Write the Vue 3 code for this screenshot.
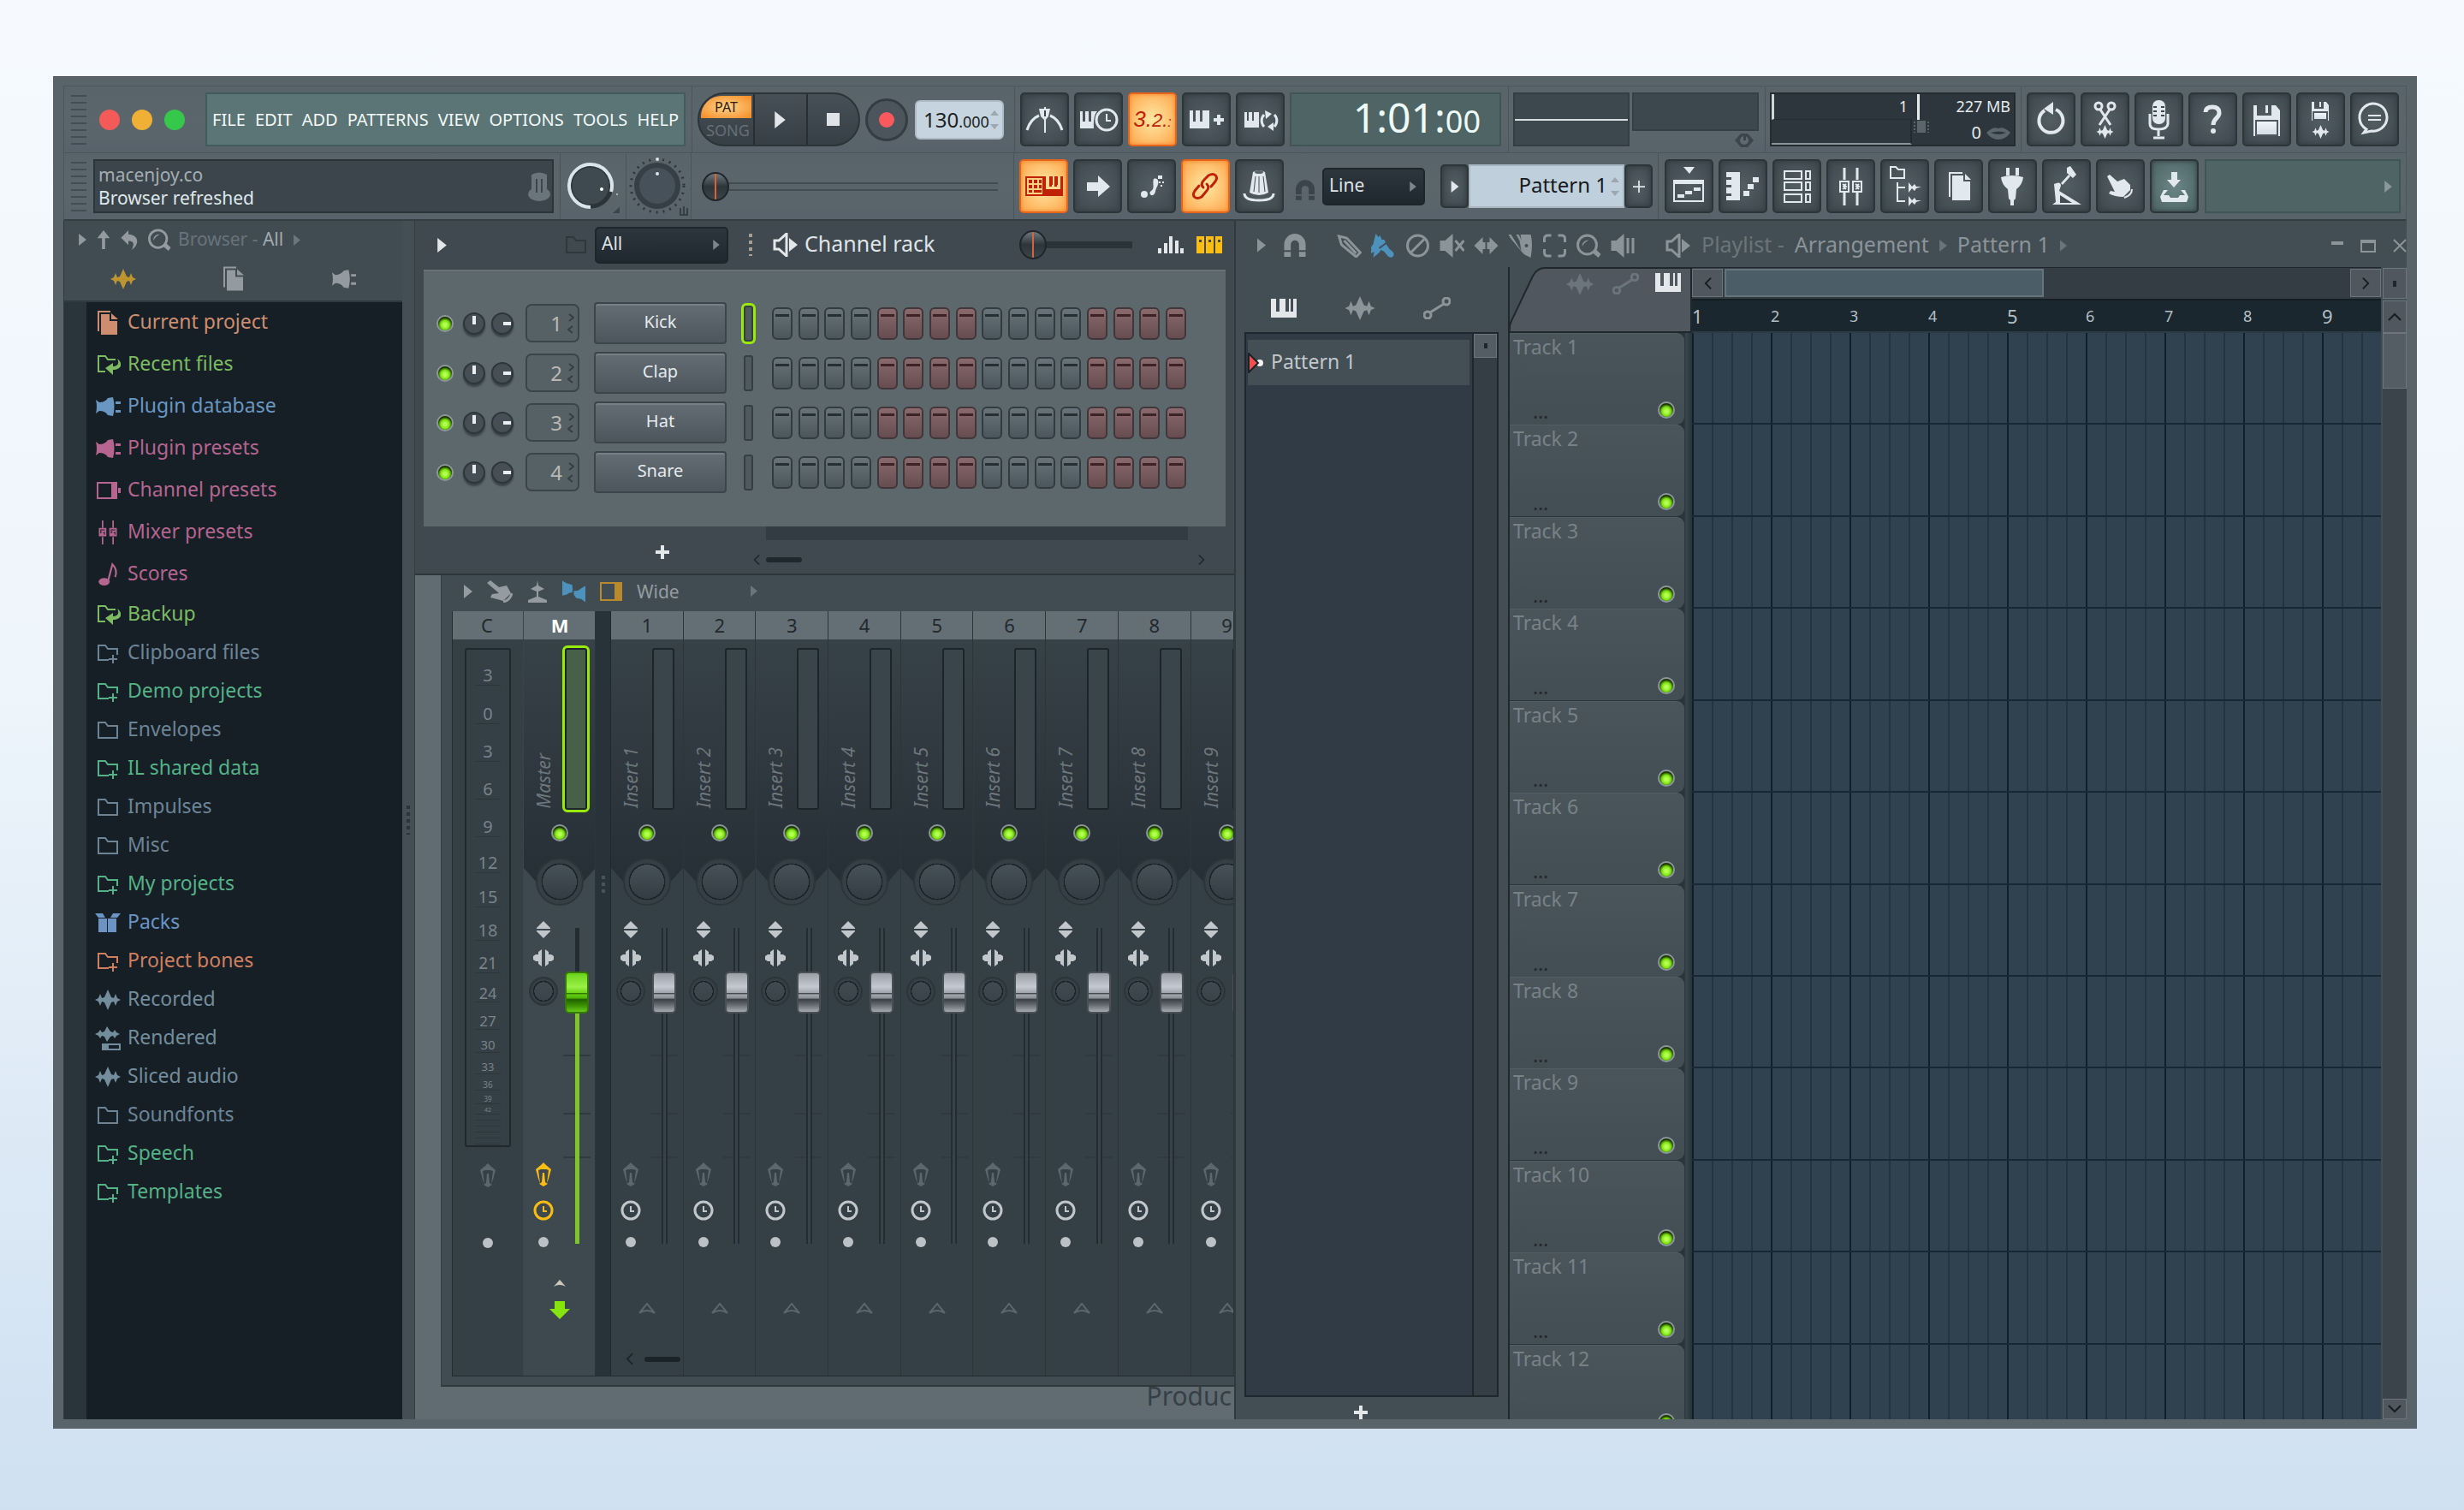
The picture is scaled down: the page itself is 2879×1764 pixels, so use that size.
<script setup>
import { ref } from 'vue'

const menus = ['FILE', 'EDIT', 'ADD', 'PATTERNS', 'VIEW', 'OPTIONS', 'TOOLS', 'HELP']

const transportToggles = [
  { icon: 'metronome', label: 'Metronome' },
  { icon: 'wait', label: 'Wait for input' },
  { icon: '', label: 'Countdown', on: true },
  { icon: 'overdub', label: 'Overdub' },
  { icon: 'loop', label: 'Loop record' },
]
const editToggles = [
  { icon: 'typing', label: 'Typing keyboard', on: true },
  { icon: 'step', label: 'Step edit' },
  { icon: 'foot', label: 'Multilink' },
  { icon: 'link', label: 'Link controllers', on: true },
  { icon: 'knob', label: 'Last tweaked' },
]
const fileTools = [
  { icon: 'undo', label: 'Undo' },
  { icon: 'cut', label: 'Cut audio' },
  { icon: 'mic', label: 'Record audio' },
  { icon: 'help', label: 'Help' },
  { icon: 'save', label: 'Save' },
  { icon: 'savewave', label: 'Export' },
  { icon: 'chat', label: 'News' },
]
const windowTools = [
  { icon: 'w-playlist', label: 'Playlist' },
  { icon: 'w-roll', label: 'Piano roll' },
  { icon: 'w-rack', label: 'Channel rack' },
  { icon: 'w-mixer', label: 'Mixer' },
  { icon: 'w-browser', label: 'Browser' },
  { icon: 'w-files', label: 'Project files' },
  { icon: 'w-plug', label: 'Plugins' },
  { icon: 'w-lamp', label: 'Tempo tapper' },
  { icon: 'w-hand', label: 'Touch controller' },
  { icon: 'w-down', label: 'Downloads', teal: true },
]

const folders = [
  ['Current project', 'docs', '#cf8d70', 1],
  ['Recent files', 'folder-back', '#7dbb62', 1],
  ['Plugin database', 'plug', '#6a97c2', 1],
  ['Plugin presets', 'plug', '#b5658f', 1],
  ['Channel presets', 'channel', '#b5658f', 1],
  ['Mixer presets', 'mixer', '#b5658f', 1],
  ['Scores', 'note', '#b5658f', 1],
  ['Backup', 'folder-back', '#7dbb62', 0],
  ['Clipboard files', 'folder-plus', '#6d8496', 0],
  ['Demo projects', 'folder-plus', '#55b287', 0],
  ['Envelopes', 'folder', '#6d8496', 0],
  ['IL shared data', 'folder-plus', '#55b287', 0],
  ['Impulses', 'folder', '#6d8496', 0],
  ['Misc', 'folder', '#6d8496', 0],
  ['My projects', 'folder-plus', '#55b287', 0],
  ['Packs', 'box', '#6b94c4', 0],
  ['Project bones', 'folder-plus', '#cf7f60', 0],
  ['Recorded', 'wave', '#738d9c', 0],
  ['Rendered', 'wave-bar', '#738d9c', 0],
  ['Sliced audio', 'wave', '#738d9c', 0],
  ['Soundfonts', 'folder', '#6d8496', 0],
  ['Speech', 'folder-plus', '#55b287', 0],
  ['Templates', 'folder-plus', '#55b287', 0],
].map(([name, icon, color, tall]) => ({ name, icon, color, tall }))

const channels = ['Kick', 'Clap', 'Hat', 'Snare']
const isRed = (n) => Math.floor((n - 1) / 4) % 2 === 1

const scale = [
  ['3', 42, 20], ['0', 45, 20], ['3', 44, 20], ['6', 44, 20], ['9', 44, 20], ['12', 42, 20],
  ['15', 40, 20], ['18', 39, 20], ['21', 38, 19], ['24', 34, 18], ['27', 32, 17], ['30', 27, 15],
  ['33', 25, 13], ['36', 19, 10], ['39', 16, 8], ['42', 12, 7],
].map(([t, h, s]) => ({ t, h, s }))

const strips = [
  { no: 'M', name: 'Master', master: true },
  ...Array.from({ length: 9 }, (_, i) => ({ no: String(i + 1), name: `Insert ${i + 1}` })),
]

const paintTools = ['pencil', 'brush', 'forbid', 'mute', 'stretch', 'slice', 'select', 'zoom', 'preview']
const line = ref('Line')
const group = ref('All')
</script>

<template>
  <div class="page">
    <svg class="sprite" aria-hidden="true">
      <defs>
        <linearGradient id="drum" x1="0" y1="0" x2="0" y2="1">
          <stop offset="0" stop-color="#f2f7fa" /><stop offset="1" stop-color="#d3dde6" />
        </linearGradient>
      </defs>
      <symbol id="metronome" viewBox="0 0 57 63">
        <path d="M8 44Q12 31 22 27M49 44Q45 31 35 27" fill="none" stroke="currentColor" stroke-width="3" />
        <path d="M22 19h13l-2 9-4 5-5-5zM28 17h2v30h-2z" fill="currentColor" />
        <path d="M28 21v7h2v-7z" fill="#3b454b" />
      </symbol>
      <symbol id="wait" viewBox="0 0 57 63">
        <path d="M7 22h3v12h3V22h4v12h3V22h7q-5 5-4 20H7z" fill="currentColor" />
        <circle cx="38" cy="32" r="12" fill="none" stroke="currentColor" stroke-width="3" />
        <path d="M38 25v8h5" fill="none" stroke="currentColor" stroke-width="2" />
      </symbol>
      <symbol id="overdub" viewBox="0 0 57 63">
        <path d="M9 21h4v13h3V21h5v13h3V21h4v13h0V21h4v21H9z" fill="currentColor" />
        <path d="M37 30h4v-4h4v4h4v4h-4v4h-4v-4h-4z" fill="currentColor" />
      </symbol>
      <symbol id="loop" viewBox="0 0 57 63">
        <path d="M10 23h3v10h2V23h4v10h2V23h6v18H10z" fill="currentColor" />
        <path d="M33 40a10 10 0 0 1 0-14M45 26a10 10 0 0 1 0 14" fill="none" stroke="currentColor" stroke-width="3" />
        <path d="M34 21l8 4-7 6zM44 35v10l-7-5z" fill="currentColor" />
      </symbol>
      <symbol id="typing" viewBox="0 0 57 63">
        <path d="M7 20h44v23H7z" fill="#c02208" />
        <path d="M9 22h18v19H9z" fill="#ffd080" />
        <path d="M11 24h4v4h-4zM17 24h4v4h-4zM23 24h3v4h-3zM11 30h4v4h-4zM17 30h4v4h-4zM23 30h3v4h-3zM11 36h4v3h-4zM17 36h9v3h-9z" fill="#c02208" />
        <path d="M31 20h4v12h3V20h3v12h3V20h4v15H31z" fill="#ffd890" />
        <path d="M38 20v10M44 20v10" stroke="#c02208" stroke-width="2" />
      </symbol>
      <symbol id="step" viewBox="0 0 57 63">
        <path d="M16 27h13v-8l14 13-14 12v-7H16z" fill="currentColor" />
      </symbol>
      <symbol id="foot" viewBox="0 0 57 63">
        <circle cx="20" cy="41" r="4" fill="currentColor" />
        <path d="M31 23c5-2 7 4 4 9s-1 8-5 10c-3 1-5-3-2-5 5-3 1-9 3-14z" fill="currentColor" />
        <path d="M36 19h5v4h-5zM37 26h2v2h-2zM41 26h2v2h-2zM39 30h2v2h-2z" fill="currentColor" />
      </symbol>
      <symbol id="link" viewBox="0 0 57 63">
        <g fill="none" stroke="#c02208" stroke-width="3" stroke-linecap="round">
          <path d="M26 33c-3-3-2-6 1-9l5-5c7-4 12 1 8 7l-5 6" />
          <path d="M30 29c3 3 2 6-1 9l-5 6c-7 4-12-1-8-7l5-6" />
        </g>
      </symbol>
      <symbol id="knob" viewBox="0 0 57 63">
        <path d="M21 15q7-4 14 0l4 24q-11 6-22 0z" fill="currentColor" />
        <path d="M24 20l-2 18M28 20v19M33 20l2 18" stroke="#434c52" stroke-width="1" />
        <ellipse cx="28" cy="15" rx="5" ry="2" fill="#59636a" />
        <path d="M11 40q0 8 17 8t17-8" fill="none" stroke="currentColor" stroke-width="3" />
      </symbol>
      <symbol id="undo" viewBox="0 0 57 63">
        <path d="M21 21a14 14 0 1 0 13-1" fill="none" stroke="currentColor" stroke-width="4" />
        <path d="M31 11v15L20 19z" fill="currentColor" />
      </symbol>
      <symbol id="cut" viewBox="0 0 57 63">
        <g fill="none" stroke="currentColor" stroke-width="3">
          <circle cx="21" cy="16" r="4" /><circle cx="36" cy="16" r="4" />
          <path d="M23 20l12 18M34 20L22 38" />
        </g>
        <use href="#wave" x="16" y="38" width="25" height="16" />
      </symbol>
      <symbol id="mic" viewBox="0 0 57 63">
        <rect x="21" y="9" width="15" height="28" rx="7" fill="currentColor" />
        <path d="M22 17h4M31 17h4M22 22h4M31 22h4M22 27h4M31 27h4" stroke="#3b454b" stroke-width="2" />
        <path d="M18 25v12q0 6 10 6t11-6V25M28 43v8M22 53h13" fill="none" stroke="currentColor" stroke-width="3" />
      </symbol>
      <symbol id="help" viewBox="0 0 57 63">
        <path d="M20 23q0-6 8-6t8 7c0 6-7 6-7 14" fill="none" stroke="currentColor" stroke-width="5" />
        <circle cx="29" cy="45" r="3" fill="currentColor" />
      </symbol>
      <symbol id="save" viewBox="0 0 57 63">
        <path d="M13 15h4v12h17V15h5l5 6v30H13z" fill="currentColor" />
        <path d="M27 15h3v9h-3z" fill="currentColor" />
        <path d="M16 33h25v17H16z" fill="url(#drum)" stroke="#50595f" stroke-width="2" />
      </symbol>
      <symbol id="savewave" viewBox="0 0 57 63">
        <path d="M18 11h3v8h11v-8h3l3 4v18H18z" fill="currentColor" />
        <path d="M27 11h2v6h-2z" fill="currentColor" />
        <path d="M20 23h16v9H20z" fill="url(#drum)" stroke="#50595f" stroke-width="2" />
        <use href="#wave" x="16" y="38" width="25" height="16" />
      </symbol>
      <symbol id="chat" viewBox="0 0 57 63">
        <path d="M19 43a16 16 0 1 1 6 2l-9 2z" fill="none" stroke="currentColor" stroke-width="3" />
        <path d="M21 27h15M21 32h15" stroke="currentColor" stroke-width="2" />
      </symbol>
      <symbol id="w-playlist" viewBox="0 0 57 63">
        <path d="M22 9h13l-6 8z" fill="currentColor" />
        <path d="M11 25h34v24H11z" fill="none" stroke="currentColor" stroke-width="2" />
        <path d="M10 24h36v5H10zM15 41h8v4h-8zM24 37h8v4h-8zM34 33h8v4h-8z" fill="currentColor" />
      </symbol>
      <symbol id="w-roll" viewBox="0 0 57 63">
        <path d="M9 15h16v33H9v-5h6v-3H9v-7h6v-3H9v-6h6v-3H9z" fill="currentColor" />
        <path d="M29 37h7v6h-7zM34 29h7v6h-7zM40 21h7v6h-7z" fill="currentColor" />
      </symbol>
      <symbol id="w-rack" viewBox="0 0 57 63">
        <path d="M14 14h20v9H14zM39 14h5v9h-5zM14 27h20v9H14zM39 27h5v9h-5zM14 41h20v9H14zM39 41h5v9h-5z" fill="none" stroke="currentColor" stroke-width="2" />
      </symbol>
      <symbol id="w-mixer" viewBox="0 0 57 63">
        <path d="M21 10v14M21 39v15M36 10v14M36 39v15" stroke="currentColor" stroke-width="3" />
        <path d="M16 26h10v12H16zM31 26h10v12H31zM19 29l4 3-4 3M23 29l-3 3 3 3M34 29l4 3-4 3M38 29l-3 3 3 3" fill="none" stroke="currentColor" stroke-width="2" />
      </symbol>
      <symbol id="w-browser" viewBox="0 0 57 63">
        <path d="M12 9h6l3 3h7v10H12zM20 27v22h9M20 33h9" fill="none" stroke="currentColor" stroke-width="2" />
        <path d="M33 27l4 5 3-3 2 3h6l-6 2-2 3-3-3-4 5zM33 43l4 5 3-3 2 3h6l-6 2-2 3-3-3-4 5z" fill="currentColor" />
      </symbol>
      <symbol id="w-files" viewBox="0 0 57 63">
        <path d="M18 44V16h15" fill="none" stroke="currentColor" stroke-width="2" />
        <path d="M21 19h13v7h8v22H21z" fill="currentColor" /><path d="M36 17l7 7h-7z" fill="currentColor" />
      </symbol>
      <symbol id="w-plug" viewBox="0 0 57 63">
        <path d="M21 10h4v9h-4zM32 10h4v9h-4zM15 21q13-4 26 0-1 9-8 14l-1 11-2 2v6h-4v-6l-2-2-1-11q-7-5-8-14z" fill="currentColor" />
      </symbol>
      <symbol id="w-lamp" viewBox="0 0 57 63">
        <path d="M29 10l4-2 7 10-4 4-7-6zM33 20l-9 10-2-2 9-10z" fill="currentColor" />
        <path d="M14 29q8-4 8 2l-2 6 26 16H12l4-3z" fill="currentColor" />
        <path d="M21 42l14 9H21z" fill="#434c52" />
      </symbol>
      <symbol id="w-hand" viewBox="0 0 57 63">
        <path d="M13 20l3-2 9 8 8-3 7 7v6l-8 8q-10 0-17-4l2-3 5 1z" fill="currentColor" />
        <path d="M42 35q0 7-9 10" fill="none" stroke="currentColor" stroke-width="2" />
      </symbol>
      <symbol id="w-down" viewBox="0 0 57 63">
        <path d="M25 15h7v9h4l-8 9-8-9h5z" fill="currentColor" />
        <path d="M16 36h5l-5 6h6l2 3h9l2-3h6l-5-6h5l4 8-2 6H14l-2-6z" fill="currentColor" />
      </symbol>

      <symbol id="wave" viewBox="0 0 30 24">
        <path d="M0 12l4-2 2-5 2 5 3-1 4-9 4 9 3 1 2-5 2 5 4 2-4 2-2 5-2-5-3 1-4 9-4-9-3-1-2 5-2-5z" fill="currentColor" />
      </symbol>
      <symbol id="wave-bar" viewBox="0 0 30 28">
        <path d="M0 9l4-2 2-3 2 3 3-1 3-6 4 6 3 1 2-3 2 3 4 2-4 2-2 3-2-3-3 1-4 6-3-6-3-1-2 3-2-3z" fill="currentColor" />
        <path d="M9 21h20v6H9z" fill="none" stroke="currentColor" stroke-width="2" /><path d="M9 21h7v6H9z" fill="currentColor" />
      </symbol>
      <symbol id="docs" viewBox="0 0 24 28">
        <path d="M1 24V1h14" fill="none" stroke="currentColor" stroke-width="2" />
        <path d="M4 4h10v8h9v16H4z" fill="currentColor" /><path d="M16 3l8 7h-8z" fill="currentColor" />
      </symbol>
      <symbol id="folder" viewBox="0 0 30 24">
        <path d="M4 3h8l3 4h11v14H4z" fill="none" stroke="currentColor" stroke-width="2" />
      </symbol>
      <symbol id="folder-plus" viewBox="0 0 30 24">
        <path d="M26 14V7H15l-3-4H4v17h12" fill="none" stroke="currentColor" stroke-width="2" />
        <path d="M21 14v10M16 19h10" stroke="currentColor" stroke-width="2" />
      </symbol>
      <symbol id="folder-back" viewBox="0 0 30 24">
        <path d="M12 20H4V2h8l3 4h9" fill="none" stroke="currentColor" stroke-width="2" />
        <path d="M26 5c8 6 4 13-5 13v6l-9-8 9-6v4c5 0 8-3 5-9z" fill="currentColor" />
      </symbol>
      <symbol id="plug" viewBox="0 0 30 24">
        <path d="M1 4l4 3q7 0 10-5l6-1q3 11 0 22l-6-1q-3-5-10-5l-4 3q2-8 0-16z" fill="currentColor" />
        <path d="M24 6h6v3h-6zM24 16h6v3h-6z" fill="currentColor" />
      </symbol>
      <symbol id="channel" viewBox="0 0 30 24">
        <path d="M3 3h22v18H3z" fill="none" stroke="currentColor" stroke-width="2" /><path d="M19 3h6v18h-6zM27 9h3v6h-3z" fill="currentColor" />
      </symbol>
      <symbol id="mixer" viewBox="0 0 26 32">
        <path d="M6 0v10M6 22v10M20 0v10M20 22v10" stroke="currentColor" stroke-width="2" />
        <path d="M2 11h8v9H2zM16 11h8v9h-8zM4 14h4l-4 4h4M18 14h4l-4 4h4" fill="none" stroke="currentColor" stroke-width="2" />
      </symbol>
      <symbol id="note" viewBox="0 0 24 26">
        <ellipse cx="8" cy="21" rx="6" ry="4" fill="currentColor" />
        <path d="M12 21L17 2q6 6 3 14" fill="none" stroke="currentColor" stroke-width="2" />
      </symbol>
      <symbol id="box" viewBox="0 0 30 24">
        <path d="M4 7h10v16H4zM15 7h10v16H15zM0 1h9l3 5H4zM30 1h-9l-3 5h8z" fill="currentColor" />
      </symbol>
      <symbol id="up" viewBox="0 0 16 24"><path d="M8 0l8 10h-6v14H6V10H0z" fill="currentColor" /></symbol>
      <symbol id="back" viewBox="0 0 20 24"><path d="M0 9l9-9v5c14 1 13 13 4 19 4-8 2-11-4-11v5z" fill="currentColor" /></symbol>
      <symbol id="zoom" viewBox="0 0 28 28">
        <circle cx="12" cy="13" r="11" fill="none" stroke="currentColor" stroke-width="3" />
        <path d="M18 22l4-4 6 6-3 4z" fill="currentColor" /><path d="M6 15q0-7 8-8-5 3-8 8z" fill="currentColor" />
      </symbol>
      <symbol id="piano" viewBox="0 0 30 22">
        <path d="M0 0h6v15h4V0h3v0h4v15h4V0h2v0h0v15h3V0h4v22H0z" fill="currentColor" />
      </symbol>
      <symbol id="auto" viewBox="0 0 32 26">
        <g fill="none" stroke="currentColor" stroke-width="3"><circle cx="5" cy="21" r="4" /><circle cx="27" cy="5" r="4" /><path d="M8 18L24 8" /></g>
      </symbol>
      <symbol id="magnet" viewBox="0 0 26 28">
        <path d="M0 20V13a13 13 0 0 1 26 0v7h-8v-7a5 5 0 0 0-10 0v7zM0 22h8v6H0zM18 22h8v6h-8z" fill="currentColor" />
      </symbol>
      <symbol id="speaker" viewBox="0 0 30 28">
        <path d="M2 9h5l9-8v26l-9-8H2z" fill="none" stroke="currentColor" stroke-width="3" /><path d="M19 6l10 8-10 8z" fill="currentColor" />
      </symbol>
      <symbol id="pencil" viewBox="0 0 28 28">
        <path d="M2 3l9 2 16 17-5 5L5 13zM8 8l14 15" fill="none" stroke="currentColor" stroke-width="3" />
      </symbol>
      <symbol id="brush" viewBox="0 0 28 28">
        <path d="M5 0l3 4 2-2 2 5 3 0 2 5 4 6q6 4 5 7-1 4-6 2-3-3-5-6l-4-2-2 3-7 6 1-7-5 3 2-6-2 0 4-6z" fill="currentColor" />
        <path d="M9 17l8-6" stroke="#434e54" stroke-width="2" />
      </symbol>
      <symbol id="forbid" viewBox="0 0 28 28">
        <circle cx="14" cy="14" r="12" fill="none" stroke="currentColor" stroke-width="3" /><path d="M6 22L22 6" stroke="currentColor" stroke-width="3" />
      </symbol>
      <symbol id="mute" viewBox="0 0 28 28">
        <path d="M0 8h6l9-8v28l-9-8H0z" fill="currentColor" /><path d="M18 8l10 12M28 8L18 20" stroke="currentColor" stroke-width="3" />
      </symbol>
      <symbol id="stretch" viewBox="0 0 28 28">
        <path d="M0 14l10-10v6h3v8h-3v6zM28 14L18 4v6h-3v8h3v6z" fill="currentColor" />
      </symbol>
      <symbol id="slice" viewBox="0 0 28 28">
        <path d="M14 1h12q3 10 0 27l-8-4z" fill="currentColor" /><path d="M0 1h3l12 19-2-12-4-7h3l4 8 2 15L3 6z" fill="currentColor" /><circle cx="21" cy="14" r="2" fill="#434e54" />
      </symbol>
      <symbol id="select" viewBox="0 0 28 28">
        <path d="M2 10V6q0-4 4-4h4M18 2h4q4 0 4 4v4M26 18v4q0 4-4 4h-4M10 26H6q-4 0-4-4v-4" fill="none" stroke="currentColor" stroke-width="3" />
      </symbol>
      <symbol id="preview" viewBox="0 0 28 28">
        <path d="M0 8h6l9-8v28l-9-8H0zM18 5h3v18h-3zM24 5h3v18h-3z" fill="currentColor" />
      </symbol>
      <symbol id="hand" viewBox="0 0 30 26">
        <path d="M0 3l4-3 10 8 9-2 5 9-9 9Q12 22 4 20l2-4 8-1z" fill="currentColor" /><path d="M29 15q-2 8-10 10" fill="none" stroke="currentColor" stroke-width="3" />
      </symbol>
      <symbol id="pin" viewBox="0 0 24 26">
        <path d="M12 0l1 6 7 4-7 3v6l10 4v3H1v-3l10-4v-6l-7-3 7-4z" fill="currentColor" />
      </symbol>
      <symbol id="bow" viewBox="0 0 28 26">
        <path d="M0 0l5 3 7 2q1 5 0 9-4 0-7 3l-5 1zM28 6v20l-5-4-6-1-3-4v-5q5 1 9-3z" fill="currentColor" />
      </symbol>
      <symbol id="updown" viewBox="0 0 18 20"><path d="M9 0l8 8v1H1V8zM9 20l8-8v-1H1v1z" fill="currentColor" /></symbol>
      <symbol id="pan" viewBox="0 0 24 20">
        <path d="M10 0v20L6 17v-3H3l-3-2V8l3-2h3V3zM14 0v20l4-3v-3h3l3-2V8l-3-2h-3V3z" fill="currentColor" />
      </symbol>
      <symbol id="lantern" viewBox="0 0 20 28">
        <path d="M10 0l3 3 6 5-3 11-2 5 2-15-3-1H7L4 9l2 15-2-5L1 8l6-5zM9 12h2l1 11 3 2-5 3-5-3 3-2z" fill="currentColor" />
      </symbol>
      <symbol id="clock" viewBox="0 0 24 24">
        <circle cx="12" cy="12" r="10" fill="none" stroke="currentColor" stroke-width="3" /><path d="M12 7v6h4" fill="none" stroke="currentColor" stroke-width="2" />
      </symbol>
      <symbol id="route" viewBox="0 0 20 14"><path d="M1 12L10 1l9 11q-9-6-18 0z" fill="none" stroke="currentColor" stroke-width="2" /></symbol>
      <symbol id="tri" viewBox="0 0 10 16"><path d="M0 0l10 8-10 8z" fill="currentColor" /></symbol>
      <symbol id="chev" viewBox="0 0 10 16"><path d="M9 1L2 8l7 7" fill="none" stroke="currentColor" stroke-width="2" /></symbol>
      <symbol id="plus" viewBox="0 0 16 16"><path d="M6 0h4v6h6v4h-6v6H6v-6H0V6h6z" fill="currentColor" /></symbol>
    </svg>

    <main class="daw">
      <header class="bars">
        <div class="bar">
          <div class="grp grow">
            <span class="grip"></span>
            <div class="lights"><i class="red"></i><i class="amber"></i><i class="green"></i></div>
            <nav class="menu"><button v-for="m in menus" :key="m">{{ m }}</button></nav>
          </div>
          <div class="grp transport">
            <div class="pill">
              <div class="mode"><button class="pat">PAT</button><button class="song">SONG</button></div>
              <button class="pbtn" aria-label="Play"><svg width="13" height="20"><use href="#tri" /></svg></button>
              <button class="pbtn" aria-label="Stop"><i class="stop"></i></button>
            </div>
            <button class="rec" aria-label="Record"><i></i></button>
            <div class="tempo"><span>130<small>.000</small></span><span class="spin"><i></i><i></i></span></div>
          </div>
          <div class="grp toggles">
            <button v-for="t in transportToggles" :key="t.label" class="tool" :class="{ on: t.on }" :aria-label="t.label">
              <svg v-if="t.icon"><use :href="'#' + t.icon" /></svg>
              <span v-else class="count">3.<small>2.<small>:</small></small></span>
            </button>
            <div class="time"><span>1:01:<small>00</small></span></div>
          </div>
          <div class="grp scopes">
            <div class="scope"></div>
            <div class="scope2"><div></div><svg width="22" height="18" viewBox="0 0 22 18"><path d="M0 9L7 1h8l7 8-7 8H7z" fill="#3b454b" /><circle cx="11" cy="9" r="5" fill="#5f6a70" /><path d="M10 3h3v6h-3z" fill="#3b454b" /></svg></div>
          </div>
          <div class="grp cpu">
            <div class="stats">
              <span class="voices">1</span><span class="ram">227 MB</span>
              <span class="blank"></span><span class="poly">0<svg width="28" height="16" viewBox="0 0 28 16"><path d="M0 8Q8 0 14 3q6-3 14 5-6 8-14 8T0 8zM5 8q9 4 18 0-9-3-18 0z" fill="#5b666c" fill-rule="evenodd" /></svg></span>
              <svg class="chip" width="18" height="14" viewBox="0 0 18 14"><path d="M4 0h10v14H4z" fill="#5b666c" /><path d="M1 1v13M17 1v13" stroke="#5b666c" stroke-width="2" stroke-dasharray="2 2" /></svg>
            </div>
          </div>
          <div class="grp tools last">
            <button v-for="t in fileTools" :key="t.icon" class="tool" :aria-label="t.label"><svg><use :href="'#' + t.icon" /></svg></button>
          </div>
        </div>
        <div class="bar">
          <div class="grp grow">
            <span class="grip"></span>
            <div class="hint">
              <div><p>macenjoy.co</p><p class="lit">Browser refreshed</p></div>
              <svg width="26" height="34" viewBox="0 0 26 34"><path d="M4 3q9-5 18 0v17q4 2 4 7-2 6-13 7Q2 33 0 27q0-5 4-7z" fill="#6a757b" /><path d="M10 8v16M16 8v16" stroke="#3b454b" stroke-width="2" /></svg>
            </div>
          </div>
          <div class="grp dial"><svg width="62" height="64" viewBox="0 0 62 64"><circle cx="28" cy="31" r="24" fill="#3f4a50" stroke="#2a3439" stroke-width="5" /><path d="M28 56A25 25 0 1 1 52 38" fill="none" stroke="#d9e4ec" stroke-width="4" /><circle cx="41" cy="35" r="2" fill="#fff" /><circle cx="59" cy="41" r="1" fill="#ccc" /><path d="M54 63h11V53z" fill="#3a444a" /></svg></div>
          <div class="grp dial"><svg width="70" height="70" viewBox="0 0 70 70"><circle cx="33" cy="34" r="31" fill="none" stroke="#2b353a" stroke-width="3" stroke-dasharray="2 6" /><circle cx="33" cy="34" r="24" fill="#46515a" stroke="#353f45" stroke-width="6" /><circle cx="33" cy="20" r="2" fill="#dfe6ea" /><circle cx="33" cy="3" r="2" fill="#dfe6ea" /><path d="M60 60v8h8v-8M64 58v9" fill="none" stroke="#343e44" stroke-width="2" /></svg></div>
          <div class="grp songpos"><input type="range" min="0" max="100" value="0" aria-label="Song position" class="slide" /></div>
          <div class="grp toggles snapgrp">
            <button v-for="t in editToggles" :key="t.icon" class="tool" :class="{ on: t.on }" :aria-label="t.label"><svg><use :href="'#' + t.icon" /></svg></button>
            <svg class="dim" width="22" height="26"><use href="#magnet" /></svg>
            <div class="drop snap"><select v-model="line" aria-label="Snap"><option>Line</option></select><svg width="8" height="12"><use href="#tri" /></svg></div>
            <div class="patsel">
              <button class="tool slim" aria-label="Pattern menu"><svg width="9" height="14"><use href="#tri" /></svg></button>
              <div class="patname">Pattern 1<span class="spin"><i></i><i></i></span></div>
              <button class="tool slim" aria-label="Add pattern"><svg width="16" height="16" viewBox="0 0 16 16"><path d="M8 0v16M0 8h16" stroke="#dfe6ea" stroke-width="2" /></svg></button>
            </div>
          </div>
          <div class="grp tools wide">
            <button v-for="t in windowTools" :key="t.icon" class="tool" :class="{ teal: t.teal }" :aria-label="t.label"><svg><use :href="'#' + t.icon" /></svg></button>
            <div class="news"><svg width="9" height="14"><use href="#tri" /></svg></div>
          </div>
        </div>
      </header>

      <div class="work">
        <aside class="browser">
          <div class="bnav">
            <svg width="9" height="14"><use href="#tri" /></svg>
            <svg width="16" height="22"><use href="#up" /></svg>
            <svg width="20" height="23"><use href="#back" /></svg>
            <svg width="27" height="26"><use href="#zoom" /></svg>
            <span class="path">Browser - <b>All</b></span>
            <svg class="faint" width="8" height="13"><use href="#tri" /></svg>
          </div>
          <div class="btabs">
            <button aria-label="Sounds" class="gold"><svg width="30" height="24"><use href="#wave" /></svg></button>
            <button aria-label="Project"><svg width="24" height="29"><use href="#docs" /></svg></button>
            <button aria-label="Plugins"><svg width="29" height="24"><use href="#plug" /></svg></button>
          </div>
          <ul class="tree">
            <li v-for="f in folders" :key="f.name" :class="{ tall: f.tall }" :style="{ color: f.color }">
              <button><svg><use :href="'#' + f.icon" /></svg>{{ f.name }}</button>
            </li>
          </ul>
        </aside>
        <div class="splitter"><i></i></div>

        <div class="center">
          <section class="rack">
            <div class="rhead">
              <svg width="11" height="17" class="bright"><use href="#tri" /></svg>
              <svg class="rfolder" width="30" height="24"><use href="#folder" /></svg>
              <div class="drop grpsel"><select v-model="group" aria-label="Channel group"><option>All</option></select><svg width="8" height="12"><use href="#tri" /></svg></div>
              <span class="dots"></span>
              <svg width="30" height="28" class="bright"><use href="#speaker" /></svg>
              <h2>Channel rack</h2>
              <input type="range" min="0" max="100" value="0" aria-label="Swing" class="slide swing" />
              <svg class="bars-ic bright" width="30" height="20" viewBox="0 0 30 20"><path d="M0 14h4v6H0zM7 8h4v12H7zM13 0h4v20h-4zM20 5h4v15h-4zM26 14h4v6h-4z" fill="currentColor" /></svg>
              <svg width="30" height="20" viewBox="0 0 30 20"><path d="M0 0h9v20H0zM11 0h9v20h-9zM22 0h8v20h-8z" fill="#fbbd12" /><path d="M3 4h3v3H3zM14 4h3v3h-3zM25 4h3v3h-3z" fill="#3e484e" /></svg>
            </div>
            <div class="rbody">
              <div v-for="(c, i) in channels" :key="c" class="chan">
                <input type="checkbox" checked class="led" :aria-label="c + ' on'" />
                <i class="mini"></i><i class="mini side"></i>
                <div class="num"><span>{{ i + 1 }}</span><svg width="8" height="26" viewBox="0 0 8 26"><path d="M2 2l5 4-5 4M6 16l-5 4 5 4" fill="none" stroke="#343e43" stroke-width="2" /></svg></div>
                <button class="cname">{{ c }}</button>
                <i class="sel" :class="{ act: i === 0 }"></i>
                <div class="steps"><button v-for="n in 16" :key="n" :class="{ r: isRed(n) }" :aria-label="c + ' step ' + n"></button></div>
              </div>
            </div>
            <div class="rfoot">
              <button class="add" aria-label="Add channel"><svg width="16" height="16"><use href="#plus" /></svg></button>
              <div class="rscroll"><i class="shade"></i><div><svg width="8" height="14"><use href="#chev" /></svg><i class="thumb"></i><svg class="flip" width="8" height="14"><use href="#chev" /></svg></div></div>
            </div>
          </section>

          <section class="desk">
            <div class="mixer">
              <div class="mhead">
                <svg width="10" height="16"><use href="#tri" /></svg>
                <svg width="30" height="26"><use href="#hand" /></svg>
                <svg width="24" height="26"><use href="#pin" /></svg>
                <svg width="27" height="26" class="blue"><use href="#bow" /></svg>
                <svg width="26" height="22" viewBox="0 0 26 22"><path d="M1 1h24v20H1z" fill="none" stroke="#b98a2b" stroke-width="2" /><path d="M17 1h8v20h-8z" fill="#b98a2b" /></svg>
                <span>Wide</span>
                <svg class="faint" width="8" height="13"><use href="#tri" /></svg>
              </div>
              <div class="strips">
                <div class="strip current">
                  <div class="no">C</div>
                  <div class="scale"><span v-for="(s, i) in scale" :key="i" :style="{ height: s.h + 'px', fontSize: s.s + 'px' }">{{ s.t }}</span><i v-for="k in 5" :key="'k' + k"></i></div>
                  <svg class="lan" width="20" height="28"><use href="#lantern" /></svg><i class="dot"></i>
                </div>
                <template v-for="s in strips" :key="s.no">
                  <div v-if="s.no === '1'" class="gutter"><i></i></div>
                  <div class="strip" :class="{ master: s.master }">
                    <div class="no">{{ s.no }}</div>
                    <div class="inner">
                      <div class="top">
                        <div class="mrow"><span class="name">{{ s.name }}</span><i class="meter"></i></div>
                        <input type="checkbox" checked class="led" :aria-label="s.name + ' on'" />
                        <i class="big"></i>
                      </div>
                      <div class="low">
                        <div class="icons">
                          <svg width="18" height="20"><use href="#updown" /></svg>
                          <svg width="24" height="20"><use href="#pan" /></svg>
                          <i class="small"></i>
                          <svg class="lan" width="20" height="28"><use href="#lantern" /></svg>
                          <svg class="clk" width="24" height="24"><use href="#clock" /></svg>
                          <i class="dot"></i>
                        </div>
                        <div class="fcol"><input type="range" class="fader" min="0" max="100" value="84" :aria-label="s.name + ' volume'" /></div>
                      </div>
                      <div class="route">
                        <svg v-if="s.master" width="24" height="48" viewBox="0 0 24 48"><path d="M5 9l7-8 7 8q-7-4-14 0z" fill="#cdc8b8" /><path d="M6 26h12v9h6L12 47 0 35h6z" fill="#86e40f" /></svg>
                        <svg v-else width="20" height="14"><use href="#route" /></svg>
                      </div>
                    </div>
                  </div>
                </template>
                <div class="mscroll"><svg width="9" height="15"><use href="#chev" /></svg><i></i></div>
              </div>
            </div>
            <p class="edition">Produc</p>
          </section>
        </div>

        <section class="playlist">
          <div class="phead">
            <svg width="10" height="17"><use href="#tri" /></svg>
            <svg class="mag" width="26" height="27"><use href="#magnet" /></svg>
            <div class="paint"><button v-for="p in paintTools" :key="p" :class="{ blue: p === 'brush' }" :aria-label="p"><svg width="29" height="28"><use :href="'#' + p" /></svg></button></div>
            <svg width="30" height="28"><use href="#speaker" /></svg>
            <h2><em>Playlist -</em> Arrangement <svg width="9" height="14"><use href="#tri" /></svg> Pattern 1 <svg width="8" height="14"><use href="#tri" /></svg></h2>
            <div class="win">
              <button aria-label="Minimize"><svg width="14" height="16" viewBox="0 0 14 16"><path d="M0 3h14v4H0z" fill="currentColor" /></svg></button>
              <button aria-label="Maximize"><svg width="18" height="16" viewBox="0 0 18 16"><path d="M1 2h16v13H1z" fill="none" stroke="currentColor" stroke-width="2" /><path d="M0 1h18v4H0z" fill="currentColor" /></svg></button>
              <button aria-label="Close"><svg width="16" height="16" viewBox="0 0 16 16"><path d="M1 1l14 14M15 1L1 15" stroke="currentColor" stroke-width="2" /></svg></button>
            </div>
          </div>
          <div class="pbody">
            <div class="picker">
              <div class="ptabs">
                <button aria-label="Patterns" class="bright"><svg width="30" height="22"><use href="#piano" /></svg></button>
                <button aria-label="Audio"><svg width="38" height="28"><use href="#wave" /></svg></button>
                <button aria-label="Automation"><svg width="32" height="26"><use href="#auto" /></svg></button>
              </div>
              <div class="plist">
                <div class="pitems"><button><svg width="18" height="24" viewBox="0 0 18 24"><circle cx="14" cy="12" r="4" fill="#f2f2f2" /><path d="M1 1l11 11L1 23z" fill="#f05050" stroke="#1b2227" stroke-width="2" /></svg>Pattern 1</button></div>
                <div class="psb"><i></i></div>
              </div>
              <button class="padd" aria-label="Add pattern"><svg width="16" height="16"><use href="#plus" /></svg></button>
            </div>
            <div class="arr">
              <div class="corner">
                <svg class="shape" viewBox="0 0 213 76" preserveAspectRatio="none"><path d="M1 75Q0 68 3 62L28 10Q33 1 42 1H212V75z" fill="#50575f" stroke="#1f282d" stroke-width="2" /></svg>
                <svg width="38" height="26" class="faint"><use href="#wave" /></svg>
                <svg width="31" height="25" class="faint"><use href="#auto" /></svg>
                <svg width="30" height="22" class="bright"><use href="#piano" /></svg>
              </div>
              <div class="hsb">
                <button aria-label="Scroll left"><svg width="9" height="16"><use href="#chev" /></svg></button><i></i><button aria-label="Scroll right"><svg class="flip" width="9" height="16"><use href="#chev" /></svg></button>
              </div>
              <div class="cornerbtn"><i></i></div>
              <div class="ruler"><span v-for="n in 9" :key="n" :class="{ major: n % 4 === 1 }">{{ n }}</span></div>
              <button class="vup" aria-label="Scroll up"><svg width="16" height="10" viewBox="0 0 16 10"><path d="M1 9l7-7 7 7" fill="none" stroke="currentColor" stroke-width="2" /></svg></button>
              <div class="tracks">
                <div v-for="n in 12" :key="n" class="track"><div><span>Track {{ n }}</span><i v-if="n < 12">…</i><input type="checkbox" checked class="led" :aria-label="'Track ' + n + ' on'" /></div></div>
              </div>
              <div class="grid"><div v-for="n in 12" :key="n"></div></div>
              <div class="vsb"><i></i><button aria-label="Scroll down"><svg width="16" height="10" viewBox="0 0 16 10"><path d="M1 1l7 7 7-7" fill="none" stroke="currentColor" stroke-width="2" /></svg></button></div>
            </div>
          </div>
        </section>
      </div>
    </main>
  </div>
</template>

<style>
body { margin: 0; }
</style>

<style scoped>
* { box-sizing: border-box; margin: 0; }
i, em { font-style: normal; }
i, svg { display: block; flex: none; }
button { font: inherit; color: inherit; background: none; border: 0; padding: 0; display: flex; align-items: center; justify-content: center; flex: none; }
.page { height: 100vh; padding: 89px 55px 95px 62px; display: flex; background: linear-gradient(#f6fafe, #eef5fb 45%, #cfe0f1); font-family: "Noto Sans", "Open Sans", sans-serif; }
.sprite { position: absolute; width: 0; height: 0; }
.daw { flex: 1; min-width: 0; display: flex; flex-direction: column; padding: 10px 12px 11px; background: #59646a; border-top: 1px solid #4b555b; }
.flip { transform: scaleX(-1); }
.bright { color: #e3e7ea; }
.faint { color: #6b767c; }
.blue { color: #4d92bd; }

/* toolbars */
.bars { flex: none; border: 1px solid #4c575d; border-bottom: 2px solid #333d42; }
.bar { display: flex; height: 77px; background: linear-gradient(#59646a, #5b666c 50%, #57626a); }
.bar + .bar { border-top: 1px solid #4a555b; height: 78px; }
.grp { display: flex; align-items: center; flex: none; border-left: 1px solid #4a555b; }
.grp.grow { flex: 1; min-width: 0; border: 0; padding-right: 7px; }
.grip { width: 18px; height: 58px; margin-left: 8px; background: repeating-linear-gradient(#434e54 0 2px, transparent 2px 8px); }
.lights { display: flex; gap: 14px; margin: 0 24px 0 15px; }
.lights i { width: 24px; height: 24px; border-radius: 50%; }
.red { background: #f45b58; }
.amber { background: #efb035; }
.green { background: #36c84b; }
.menu { flex: 1; display: flex; justify-content: space-between; height: 63px; padding: 0 6px; background: #5b7475; border: 2px solid #425b5d; color: #f3f8f8; font-size: 20px; }
.transport { width: 377px; padding-left: 6px; }
.pill { display: flex; width: 190px; height: 63px; border-radius: 32px; overflow: hidden; border: 2px solid #2a3439; background: linear-gradient(#465056, #363f45); }
.mode { width: 63px; padding: 2px; display: flex; flex-direction: column; }
.pat { height: 26px; background: radial-gradient(#ffd38a, #f58a22); border-radius: 24px 0 0 0; color: #2d2013; font-size: 16px; }
.song { height: 28px; color: #656f75; font-size: 18px; padding-left: 4px; }
.pbtn { flex: 1; border-left: 2px solid #272f35; color: #e2e6ea; }
.stop { width: 15px; height: 15px; background: #dfe3e8; }
.rec { width: 50px; height: 50px; margin-left: 6px; border-radius: 50%; border: 3px solid #333d43; background: #4c555c; }
.rec i { width: 18px; height: 18px; border-radius: 50%; background: #f9595c; }
.tempo { display: flex; align-items: center; justify-content: space-between; width: 104px; height: 46px; margin-left: 8px; padding: 0 4px 0 8px; border-radius: 6px; border: 2px solid #aebbc5; background: #c5d4df; color: #1a1f23; font-size: 24px; }
.tempo small { font-size: 18px; }
.spin { display: flex; flex-direction: column; gap: 10px; }
.spin i { border: 5px solid transparent; border-top: 0; border-bottom: 6px solid #9da7ae; }
.spin i + i { transform: scaleY(-1); }
.toggles { width: 577px; padding-left: 6px; gap: 6px; }
.tool { width: 57px; height: 63px; border-radius: 5px; border: 2px solid #2b353a; background: radial-gradient(#535d64, #3d474d); box-shadow: inset 0 0 5px #2f393e; color: #e2e9ee; }
.tool svg { width: 57px; height: 63px; }
.tool.on { border-color: #e8641b; background: radial-gradient(#ffe9a4, #fda54a); box-shadow: inset 0 0 5px #f5832a; }
.tool.teal { background: radial-gradient(#6b8586, #4b6263); }
.count { color: #c02208; font-family: "Liberation Sans", sans-serif; font-style: italic; font-size: 26px; }
.count small { font-size: 22px; }
.count small small { font-size: 16px; }
.time { width: 247px; height: 63px; padding-right: 22px; display: flex; align-items: center; justify-content: flex-end; background: #4e6465; border: 2px solid #3f5556; color: #eefaf8; font-size: 48px; line-height: 60px; }
.time small { font-size: 36px; }
.scopes { width: 300px; padding-left: 5px; gap: 3px; }
.scope { width: 136px; height: 63px; border: 2px solid #333d43; background: linear-gradient(#3d484e 29px, #d7dde0 29px 31px, #3d484e 31px); }
.scope2 { width: 148px; height: 63px; }
.scope2 div { height: 45px; border: 2px solid #363f45; background: #3d484e; }
.scope2 svg { margin: 2px 6px 0 auto; }
.cpu { width: 299px; padding-left: 5px; }
.stats { position: relative; display: grid; grid-template-columns: 164px 1fr; width: 287px; height: 63px; border: 2px solid #232c31; background: #2c363c; color: #e4e9ec; font-size: 18px; line-height: 29px; text-align: right; }
.voices { border-left: 3px solid #cfd6da; padding-right: 5px; border-bottom: 1px solid #232c31; }
.ram { border-left: 3px solid #e6ebee; margin-left: 6px; padding-right: 4px; }
.blank { border-right: 2px solid #222b30; border-bottom: 2px solid #8a949a; }
.poly { display: flex; align-items: center; justify-content: flex-end; gap: 6px; padding-right: 4px; font-size: 20px; }
.chip { position: absolute; left: 166px; top: 31px; }
.tools { width: 450px; padding-left: 6px; gap: 6px; }
.tools.wide { width: 874px; padding-left: 7px; }
.news { flex: 1; height: 63px; margin: 0 6px 0 1px; display: flex; align-items: center; justify-content: flex-end; padding-right: 8px; background: #4e6465; border: 2px solid #3f5556; color: #89989a; }
.hint { flex: 1; height: 63px; margin-left: 8px; padding: 0 2px 0 4px; display: flex; justify-content: space-between; align-items: center; border: 2px solid #2b3439; background: #3b454b; color: #a4adb1; font-size: 21px; line-height: 27px; }
.hint .lit { color: #dfe7ea; }
.dial { width: 77px; justify-content: center; }
.dial + .dial { width: 76px; }
.songpos { width: 377px; padding: 0 3px 0 12px; }
.slide { appearance: none; width: 100%; height: 44px; margin: 0; background: linear-gradient(#424d53 2px, #59646a 2px 8px, #424d53 8px) center / calc(100% - 30px) 10px no-repeat; }
.slide::-webkit-slider-thumb { appearance: none; width: 32px; height: 34px; border-radius: 50%; border: 2px solid #1f272c; background: linear-gradient(90deg, transparent 13px, #e0602e 13px 15px, transparent 15px), linear-gradient(#6c777e, #2c353a 50%, #3a444a); }
.snapgrp { width: 753px; }
.snapgrp .dim { color: #3a444a; margin: 8px 3px 0 8px; }
.drop { position: relative; display: flex; align-items: center; border: 2px solid #1d262b; border-radius: 5px; background: linear-gradient(#2d363d, #20282f); color: #dde3e6; }
.drop select { appearance: none; width: 100%; height: 100%; border: 0; padding: 0 6px 4px; background: none; font: inherit; font-size: 21px; color: inherit; }
.drop svg { position: absolute; right: 8px; color: #7d868c; }
.snap { width: 120px; height: 44px; }
.patsel { display: flex; margin-left: 12px; }
.tool.slim { width: 33px; height: 51px; }
.tool.slim svg { width: 16px; height: 14px; }
.patname { width: 182px; height: 51px; display: flex; align-items: center; justify-content: flex-end; gap: 4px; padding: 0 4px 4px 0; background: #bfd0dc; border: 2px solid #a7b6c1; color: #16191b; font-size: 24px; }
.patname .spin { margin-top: 4px; }

/* work area */
.work { flex: 1; min-height: 0; display: grid; grid-template-columns: 396px 15px 959px minmax(0, 1fr); }
.browser { display: flex; flex-direction: column; min-height: 0; background: #414c52; border-left: 1px solid #2f393e; color: #939ba1; }
.bnav { height: 46px; display: flex; align-items: center; padding: 0 0 2px 17px; font-size: 21px; }
.bnav svg + svg { margin-left: 12px; }
.bnav .path { margin: 0 12px 2px 8px; color: #68737a; }
.bnav b { font-weight: 400; color: #a3aaaf; }
.btabs { height: 49px; display: grid; grid-template-columns: repeat(3, 129px); padding: 0 0 4px 4px; border-bottom: 2px solid #2f393e; }
.gold { color: #bd942f; }
.tree { flex: 1; min-height: 0; overflow: hidden; list-style: none; padding: 0 0 0 10px; margin-left: 0; background: #161f26; border-left: 26px solid #2a343b; font-size: 23px; }
.tree li { height: 45px; display: flex; }
.tree li.tall { height: 49px; }
.tree button { gap: 8px; padding-bottom: 5px; }
.tree svg { width: 30px; height: 28px; margin-top: 3px; }
.splitter { display: flex; align-items: center; justify-content: center; background: #444f55; border-right: 1px solid #333d42; }
.splitter i { width: 4px; height: 34px; background: repeating-linear-gradient(#2b3439 0 4px, transparent 4px 8px); }

.center { display: flex; flex-direction: column; min-height: 0; overflow: hidden; border-right: 2px solid #2f393e; }
.rack { flex: none; background: #3f494f; border-bottom: 2px solid #2c363b; }
.rhead { height: 57px; display: flex; align-items: center; padding: 0 14px 1px 26px; }
.rfolder { margin-left: 136px; color: #2e383d; }
.grpsel { width: 156px; height: 43px; margin-left: 7px; }
.dots { width: 4px; height: 26px; margin: 0 24px; background: repeating-linear-gradient(#a79e94 0 4px, transparent 4px 8px); }
h2 { font-weight: 400; font-size: 25px; }
.rhead h2 { margin: 0 auto 0 7px; padding-bottom: 4px; color: #dfe4e7; }
.swing { width: 134px; height: 40px; background: linear-gradient(#2a3338, #2a3338) 20px center / 112px 8px no-repeat; }
.bars-ic { margin: 0 15px 0 28px; }
.rbody { margin: 0 10px; height: 300px; padding-top: 36px; display: flex; flex-direction: column; gap: 9px; background: #5d686d; border-top: 2px solid #687379; }
.chan { display: flex; align-items: center; height: 49px; padding-left: 15px; color: #e6eaec; }
.led { appearance: none; flex: none; width: 20px; height: 20px; margin: 0; border-radius: 50%; border: 2px solid #8c979b; background: radial-gradient(circle at 50% 60%, #b4ff50 15%, #7be012 42%, #173000 68%); }
.mini { width: 26px; height: 26px; margin-left: 11px; border-radius: 50%; border: 2px solid #2c363b; background: linear-gradient(#e8eef1, #e8eef1) center 2px / 4px 10px no-repeat, #454f55; box-shadow: 0 3px 2px #3a444a; }
.mini.side { margin-left: 7px; background: linear-gradient(#e8eef1, #e8eef1) 12px center / 9px 4px no-repeat, #454f55; }
.num { width: 63px; height: 45px; margin: 0 17px 0 14px; display: flex; align-items: center; justify-content: flex-end; gap: 6px; padding-right: 4px; border: 2px solid #3a444a; border-radius: 7px; background: #566166; color: #b9b8b3; font-size: 24px; }
.cname { width: 155px; height: 49px; padding-bottom: 4px; border: 2px solid #3b454b; border-radius: 4px; background: linear-gradient(#636d73, #4d565d); box-shadow: inset 0 2px 0 #757f85; font-size: 20px; }
.sel { width: 11px; height: 42px; margin: 0 22px 0 20px; border: 2px solid #343e44; border-radius: 3px; background: #4f5a60; }
.sel.act { outline: 3px solid #98ea0c; }
.steps { display: flex; justify-content: space-between; width: 484px; }
.steps button { width: 24px; height: 38px; border: 2px solid #323b41; border-radius: 6px; background: linear-gradient(#262f34, #262f34) center 6px / 16px 3px no-repeat, linear-gradient(#68737a, #4b555c); }
.steps button.r { border-color: #41363a; background: linear-gradient(#3d2326, #3d2326) center 6px / 16px 3px no-repeat, linear-gradient(#8a6a6c, #664c50); }
.rfoot { height: 55px; display: flex; padding-left: 281px; color: #e3e7ea; }
.add { width: 16px; height: 60px; }
.rscroll { width: 528px; margin-left: 98px; color: #1f282d; }
.shade { width: 493px; height: 16px; margin-left: 15px; background: #323c42; }
.rscroll div { display: flex; align-items: center; height: 46px; }
.thumb { width: 42px; height: 6px; margin: 0 auto 0 7px; border-radius: 3px; background: #1f282d; }

.desk { flex: 1; min-height: 0; display: flex; flex-direction: column; padding-left: 30px; background: #616c72; }
.mixer { flex: 1; min-height: 0; display: flex; flex-direction: column; padding: 0 0 10px 12px; background: #414c52; border-left: 1px solid #333d42; border-bottom: 2px solid #2f393e; }
.mhead { height: 42px; flex: none; display: flex; align-items: center; padding: 0 0 5px 14px; color: #949ca1; font-size: 21px; }
.mhead svg + svg { margin-left: 17px; }
.mhead span { margin: 0 83px 0 17px; }
.strips { position: relative; flex: 1; min-height: 0; display: grid; grid-template-columns: 83px 84px 18px repeat(8, 84fr) 50fr; border-left: 1px solid #232c31; border-bottom: 1px solid #232c31; }
.strip { overflow: hidden; min-width: 0; background: #354046; border-right: 1px solid #2b353a; display: flex; flex-direction: column; }
.strip.master { background: #3e494f; }
.inner { width: 84px; }
.no { height: 33px; line-height: 33px; width: 86px; padding-right: 2px; flex: none; text-align: center; background: #646f75; color: #22292d; font-size: 22px; }
.master .no { font-weight: 700; color: #fff; }
.gutter { display: flex; align-items: center; justify-content: center; background: #28323a; border-right: 1px solid #1f282d; }
.gutter i { width: 4px; height: 20px; margin-bottom: 256px; background: repeating-linear-gradient(#49545a 0 4px, transparent 4px 8px); }
.current { align-items: center; border-right-color: #3a454b; }
.scale { width: 54px; height: 583px; margin-top: 10px; padding: 0 10px; border: 2px solid #1f282d; border-radius: 3px; color: #78838a; flex: none; }
.scale span { display: flex; align-items: flex-end; justify-content: center; line-height: 1; padding-bottom: 1px; border-bottom: 1px solid #2b353a; }
.scale i { height: 7px; border-bottom: 1px solid #2b353a; }
.lan { color: #5c676d; }
.current .lan { margin-top: 19px; }
.current .dot { margin-top: 59px; }
.dot { width: 12px; height: 12px; border-radius: 50%; background: #bcc1c5; }
.top { position: relative; display: flex; flex-direction: column; align-items: center; height: 312px; padding-top: 10px; z-index: 0; }
.top::before { content: ""; position: absolute; inset: 0 0 28px; z-index: -1; background: linear-gradient(#374248, #262f35); clip-path: polygon(0 0, 100% 0, 100% 94%, 82% 100%, 18% 100%, 0 94%); }
.mrow { align-self: stretch; height: 189px; display: flex; justify-content: space-between; align-items: flex-end; padding: 0 10px; }
.name { writing-mode: vertical-rl; transform: rotate(180deg); color: #6d777d; font-style: italic; font-size: 21px; line-height: 26px; padding-top: 2px; white-space: nowrap; }
.meter { width: 26px; height: 189px; border: 2px solid #1c252a; border-radius: 3px; background: #3a454b; }
.master .meter { background: #47604a; outline: 3px solid #98ea0c; }
.top .led { margin-top: 17px; }
.big { width: 56px; height: 56px; margin-top: 19px; border-radius: 50%; border: 2px solid #2b353a; background: radial-gradient(closest-side, transparent 76%, #1b2429 77% 82%, #363f46 83%), linear-gradient(#4a545b, #30393f); }
.low { display: flex; height: 398px; }
.icons { width: 46px; display: flex; flex-direction: column; align-items: center; padding-top: 17px; color: #c2c7cb; }
.icons svg + svg { margin-top: 13px; }
.small { width: 34px; height: 34px; margin-top: 12px; border-radius: 50%; border: 2px solid #2b353a; background: radial-gradient(closest-side, transparent 70%, #1b2429 72% 80%, #353f45 82%), linear-gradient(#414b51, #384248); }
.icons .lan { margin-top: 183px; }
.icons .clk { margin-top: 16px; }
.icons .dot { margin-top: 19px; }
.master .icons .lan, .master .icons .clk { color: #f8bd14; }
.fcol { width: 32px; padding-top: 25px; display: flex; justify-content: center; background: linear-gradient(#2f393f, #2f393f) center 173px / 32px 2px no-repeat, linear-gradient(#2f393f, #2f393f) center 241px / 32px 2px no-repeat, linear-gradient(#2f393f, #2f393f) center 292px / 32px 2px no-repeat; }
.fader { appearance: none; writing-mode: vertical-lr; direction: rtl; width: 28px; height: 369px; margin: 0; background: linear-gradient(90deg, #232c31 2px, #37424a 2px 5px, #232c31 5px) center / 7px 100% no-repeat; }
.fader::-webkit-slider-thumb { appearance: none; width: 28px; height: 49px; border-radius: 5px; border: 2px solid #4a5056; background: linear-gradient(#9a9fa7, #c4c8d0 35%, #a2a6af 50%, #3f444b 52%, #a0a4ad 56%, #8a8f98 64%, #3b4046 68%, #666b73 82%, #a5a9b1); }
.master .fader { background: linear-gradient(#232c31, #232c31 90px, #7fc42c 90px) center / 5px 100% no-repeat; }
.master .fader::-webkit-slider-thumb { border-color: #357a06; background: linear-gradient(#6bd31c, #9af046 35%, #6ed51b 50%, #2c7200 52%, #62cb12 56%, #4fb508 64%, #236200 68%, #378c00 82%, #66c81c); }
.route { height: 92px; display: flex; align-items: center; justify-content: center; padding-top: 52px; color: #5b666c; }
.master .route { padding-top: 30px; }
.mscroll { position: absolute; left: 202px; bottom: 12px; display: flex; align-items: center; gap: 13px; color: #1b2429; }
.mscroll i { width: 42px; height: 6px; border-radius: 3px; background: #1b2429; }
.edition { height: 38px; flex: none; padding-right: 3px; text-align: right; font-size: 30px; line-height: 22px; color: #363f45; }

/* playlist */
.playlist { display: flex; flex-direction: column; min-height: 0; min-width: 0; background: #434e54; color: #8b9499; }
.phead { height: 54px; flex: none; display: flex; align-items: center; padding: 3px 0 0 25px; }
.mag { margin: 0 36px 0 21px; }
.paint { display: flex; gap: 11px; margin-right: 35px; }
.phead h2 { display: flex; align-items: center; gap: 12px; margin: 0 0 4px 12px; }
.phead em, .phead h2 svg { color: #6a757b; }
.phead h2 svg { margin-top: 4px; }
.win { display: flex; gap: 20px; margin-left: auto; }
.pbody { flex: 1; min-height: 0; display: flex; }
.picker { width: 320px; flex: none; display: flex; flex-direction: column; padding: 0 11px 0 10px; border-right: 2px solid #1f282d; }
.ptabs { height: 76px; display: flex; justify-content: space-between; align-items: center; padding: 20px 56px 0 31px; }
.plist { flex: 1; min-height: 0; display: flex; border: 2px solid #1d272d; background: #303b46; }
.pitems { flex: 1; padding: 7px 3px 0 2px; }
.pitems button { width: 100%; height: 53px; padding-bottom: 4px; justify-content: flex-start; gap: 9px; background: #434f55; color: #c2c8cc; font-size: 23px; }
.pitems svg { margin-top: 4px; }
.psb { width: 29px; border-left: 2px solid #1d272d; background: #343e44; }
.psb i { height: 28px; border: 1px solid #6b757b; background: #545d64; }
.psb i::after { content: ""; display: block; width: 4px; height: 6px; margin: 10px auto; background: #1d272d; }
.padd { padding-top: 10px; align-self: center; color: #e3e7ea; margin-right: 26px; height: 26px; }
.arr { flex: 1; min-width: 0; display: grid; grid-template-columns: 213px minmax(0, 1fr) 30px; grid-template-rows: 39px 38px minmax(0, 1fr); }
.corner { grid-row: span 2; position: relative; display: flex; align-items: flex-start; justify-content: flex-end; gap: 19px; padding: 7px 13px 0 0; z-index: 0; margin-left: -1px; }
.corner svg { position: relative; }
.corner .shape { position: absolute; inset: 0; width: 100%; height: 100%; z-index: -1; }
.hsb { display: flex; padding: 1px 0 2px; background: #333d43; border-top: 1px solid #1d272d; border-bottom: 2px solid #131d22; color: #171e22; }
.hsb button { width: 36px; background: #50575f; border: 1px solid #6b757b; }
.hsb i { width: 373px; margin: 0 auto 0 2px; background: #4b5d66; border: 2px solid #66757c; }
.cornerbtn { margin: 1px 0 2px 2px; display: flex; align-items: center; justify-content: center; background: #50575f; border: 1px solid #6b757b; }
.cornerbtn i { width: 4px; height: 7px; background: #1d272d; }
.ruler { display: flex; align-items: center; overflow: hidden; background: #1b272f; border-bottom: 2px solid #2b3a43; color: #b4bfc5; font-size: 18px; }
.ruler span { flex: 0 0 92px; }
.ruler .major { font-size: 22px; }
.vup { margin-left: 2px; background: #50575f; border: 1px solid #6b757b; color: #171e22; }
.tracks, .grid { display: grid; grid-template-rows: repeat(11, 107fr) 87fr; min-height: 0; overflow: hidden; }
.track { overflow: hidden; background: linear-gradient(90deg, #29343b 204px, #3a464d 206px, #29343b 212px); }
.track div { position: relative; width: 204px; height: 107px; padding: 1px 0 0 4px; background: linear-gradient(#4a555b, #434e54); border-top: 1px solid #525d63; border-radius: 0 9px 9px 0; font-size: 23px; line-height: 28px; color: #778287; }
.track i { position: absolute; left: 27px; bottom: 4px; color: #22292d; font-size: 23px; line-height: 23px; }
.track .led { position: absolute; right: 11px; bottom: 7px; }
.grid { background: repeating-linear-gradient(90deg, #101f29 0 2px, transparent 2px 92px), repeating-linear-gradient(90deg, #223440 0 2px, #30424f 2px 23px); }
.grid div { border-bottom: 2px solid #172733; }
.grid div:last-child { border: 0; }
.vsb { display: flex; flex-direction: column; justify-content: space-between; margin-left: 2px; background: #3a444a; color: #171e22; }
.vsb i { height: 65px; background: #545d64; border: 1px solid #6b757b; }
.vsb button { height: 24px; background: #50575f; border: 1px solid #6b757b; }
</style>
